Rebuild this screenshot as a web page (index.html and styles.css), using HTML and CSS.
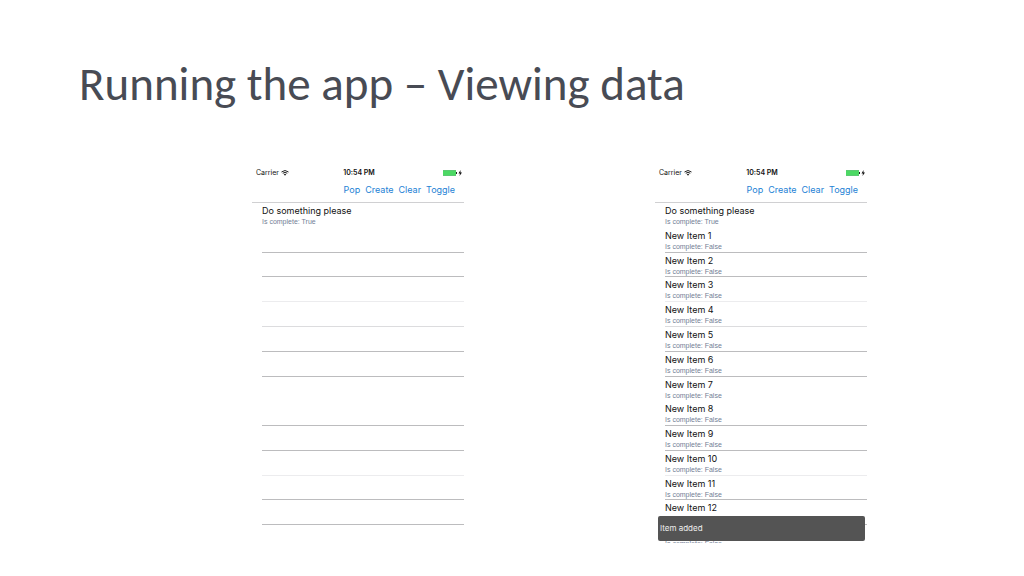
FILE: index.html
```html
<!DOCTYPE html>
<html lang="en">
<head>
<meta charset="utf-8">
<title>Running the app – Viewing data</title>
<link rel="stylesheet" href="styles.css">
<script src="phones.js" defer></script>
</head>
<body>
<h1 class="title">Running the app – Viewing data</h1>
<main class="phones">
  <section class="phone">
    <div class="status">
      <span class="carrier">Carrier
        <svg class="wifi" viewBox="0 0 16 12" aria-hidden="true"><path d="M1 4Q8-2 15 4M3.500 6.500Q8 3 12.500 6.500" fill="none" stroke="#222" stroke-width="2"/><path d="M5.500 8.500Q8 6.500 10.500 8.500L8 11.500Z" fill="#222"/></svg>
      </span>
      <span class="time">10:54 PM</span>
      <svg class="battery" viewBox="0 0 19 6" aria-hidden="true"><rect width="13" height="6" rx="1" fill="#4cd964"/><path d="M0 .5H13M0 5.500H13" stroke="#5cc872"/><rect x="13" y="2" width="1" height="2" fill="#222"/><path d="M17.500 0L15.500 3.500H17L16.500 6L19 2.500H17.500Z" fill="#111"/></svg>
    </div>
    <nav class="toolbar">
      <button class="action">Pop</button><button class="action">Create</button><button class="action">Clear</button><button class="action">Toggle</button>
    </nav>
    <div class="viewport"><ul class="list" data-items="0"></ul></div>
  </section>
  <section class="phone">
    <div class="status">
      <span class="carrier">Carrier
        <svg class="wifi" viewBox="0 0 16 12" aria-hidden="true"><path d="M1 4Q8-2 15 4M3.500 6.500Q8 3 12.500 6.500" fill="none" stroke="#222" stroke-width="2"/><path d="M5.500 8.500Q8 6.500 10.500 8.500L8 11.500Z" fill="#222"/></svg>
      </span>
      <span class="time">10:54 PM</span>
      <svg class="battery" viewBox="0 0 19 6" aria-hidden="true"><rect width="13" height="6" rx="1" fill="#4cd964"/><path d="M0 .5H13M0 5.500H13" stroke="#5cc872"/><rect x="13" y="2" width="1" height="2" fill="#222"/><path d="M17.500 0L15.500 3.500H17L16.500 6L19 2.500H17.500Z" fill="#111"/></svg>
    </div>
    <nav class="toolbar">
      <button class="action">Pop</button><button class="action">Create</button><button class="action">Clear</button><button class="action">Toggle</button>
    </nav>
    <div class="viewport"><ul class="list" data-items="13"></ul></div>
    <div class="toast" role="status">Item added</div>
  </section>
</main>
</body>
</html>
```
FILE: styles.css
```css
* { box-sizing: border-box; }
body { margin: 0; background: #fff; font-family: Inter, "Liberation Sans", sans-serif; color: #111; }
.title { margin: 0; padding: 56px 79px 0; font: 400 47px/56px Carlito, Calibri, Lato, sans-serif; color: #484b54; }
.phones { display: grid; grid-template-columns: 1fr 1fr; gap: 191px; padding: 53px 157px 0 252px; }
.phone { position: relative; min-width: 0; }
.status { display: grid; grid-template-columns: 1fr auto 1fr; align-items: center; height: 14px; padding: 0 2px 0 4px; font-size: 7px; line-height: 14px; }
.carrier { display: flex; align-items: center; gap: 2px; padding-top: 1px; }
.wifi { width: 8px; height: 6px; }
.time { padding-top: 1px; font-weight: 600; }
.battery { width: 19px; height: 6px; justify-self: end; }
.toolbar { display: flex; justify-content: flex-end; gap: 5px; height: 24px; padding: 4px 9px 0 0; border-bottom: 1px solid #d0d0d2; }
.action { padding: 0; border: 0; background: none; height: 14px; font: 400 9px/14px Inter, "Liberation Sans", sans-serif; color: #2482d5; }
.viewport { height: 340px; overflow: hidden; }
.list { display: grid; grid-auto-rows: 1fr; height: 347px; margin: 0; padding: 0 0 0 10px; list-style: none; }
.row { display: flex; flex-direction: column; border-bottom: 1px solid transparent; padding-top: 2px; min-height: 0; }
.row.strong { border-color: #bcbcbe; }
.row.light { border-color: #dcdcde; }
.row.faint { border-color: #ececee; }
.name { min-height: 12px; font-size: 9px; line-height: 12px; }
.state { font: 400 7px/9px "Liberation Sans", Arial, sans-serif; color: #738096; }
.toast { position: absolute; left: 3px; right: 2px; bottom: 2px; height: 25px; padding-left: 2px; border-radius: 2px; background: #545454; color: #eee; font-size: 8px; line-height: 25px; }
```
FILE: phones.js
```js
const tones = ['', 'strong', 'strong', 'faint', 'light', 'strong', 'strong', '', 'strong', 'strong', 'faint', 'strong', 'strong', ''];
// The toast covers these lines of text.
const covered = { state: 12, name: 13 };

function line(kind, text) {
  const span = document.createElement('span');
  span.className = kind;
  span.textContent = text;
  return span;
}

function fill(list) {
  const count = Number(list.dataset.items);
  tones.forEach((tone, i) => {
    const row = document.createElement('li');
    row.className = ('row ' + tone).trim();
    if (i <= count) {
      const name = i ? 'New Item ' + i : 'Do something please';
      row.append(line('name', i === covered.name ? '' : name));
      if (i !== covered.state) row.append(line('state', 'Is complete: ' + (i ? 'False' : 'True')));
    }
    list.append(row);
  });
}

document.querySelectorAll('.list').forEach(fill);
```
